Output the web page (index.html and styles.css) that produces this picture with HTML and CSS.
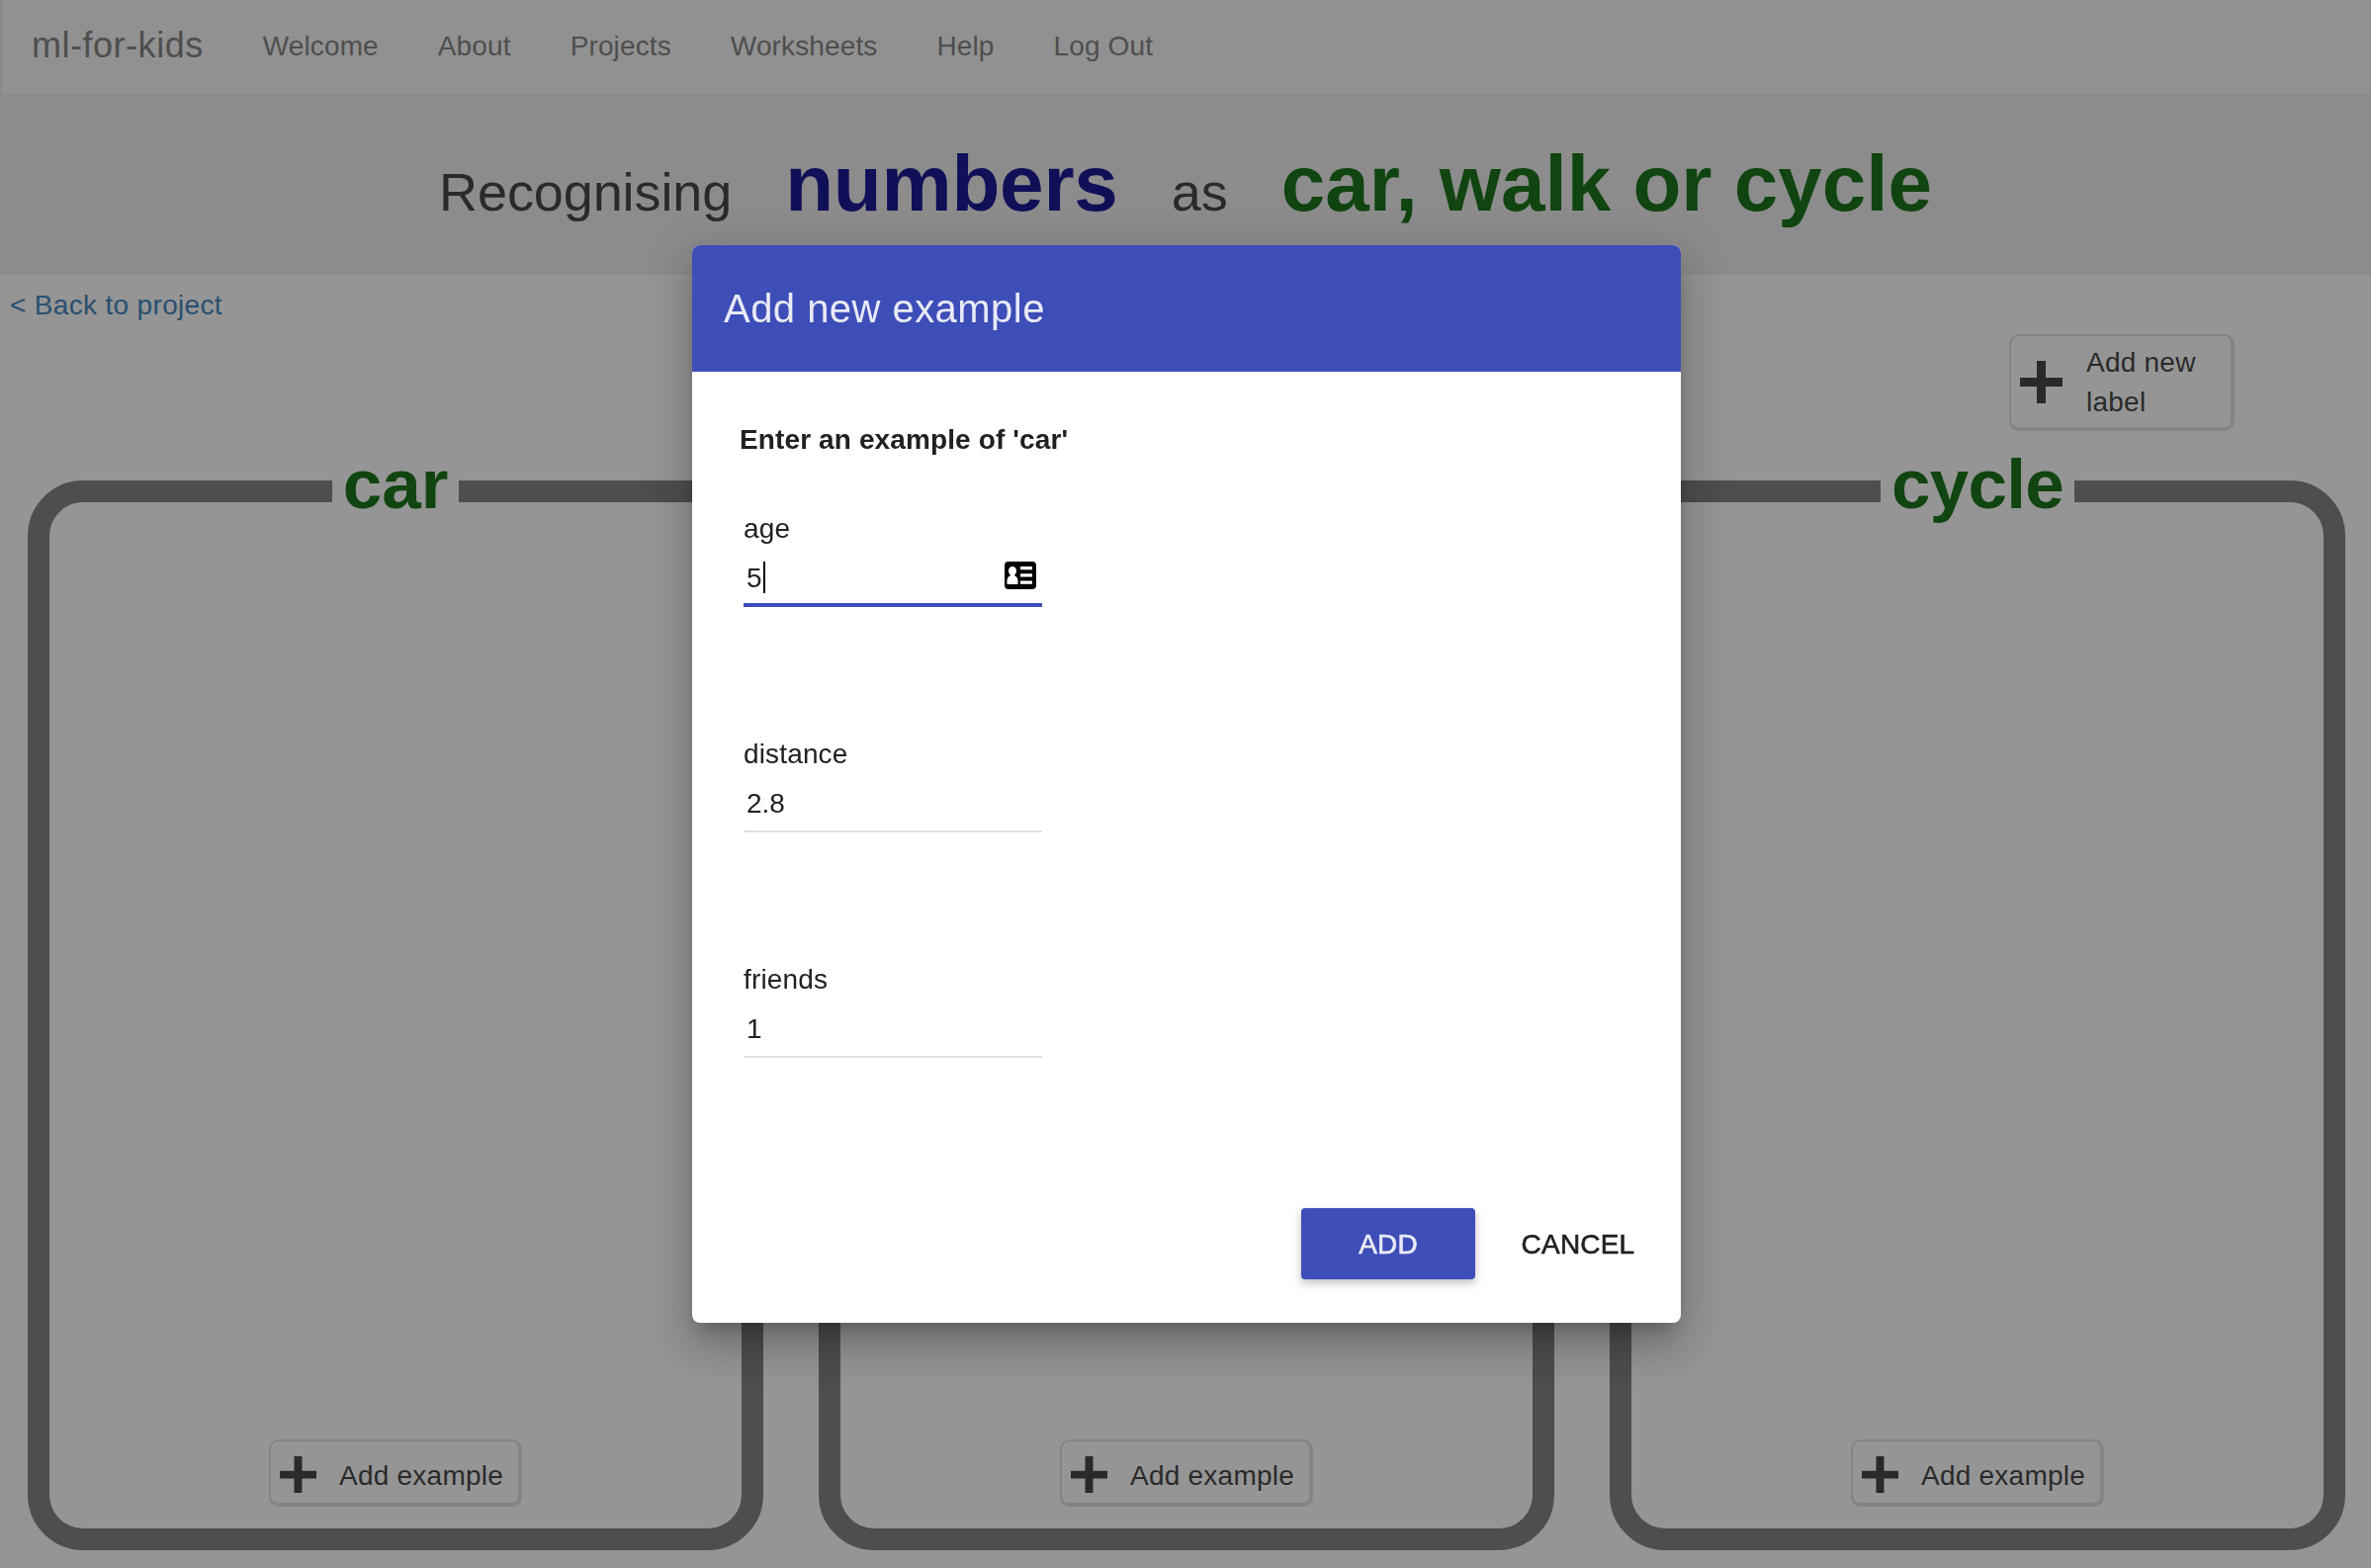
FILE: index.html
```html
<!DOCTYPE html>
<html lang="en">
<head>
<meta charset="utf-8">
<title>ml-for-kids</title>
<link rel="stylesheet" href="styles.css">
</head>
<body>
<div class="page">
  <nav class="navbar">
    <a class="brand">ml-for-kids</a>
    <a class="nav-link">Welcome</a>
    <a class="nav-link">About</a>
    <a class="nav-link">Projects</a>
    <a class="nav-link">Worksheets</a>
    <a class="nav-link">Help</a>
    <a class="nav-link">Log Out</a>
  </nav>
  <header class="banner">
    <span class="banner-text banner-verb">Recognising</span>
    <strong class="banner-type">numbers</strong>
    <span class="banner-text">as</span>
    <strong class="banner-labels">car, walk or cycle</strong>
  </header>
  <div class="back"><a class="back-link">&lt; Back to project</a></div>
  <div class="toolbar">
    <button class="btn btn-label">
      <svg class="plus-large" viewBox="0 0 43 43"><path d="M17 0h9v17h17v9H26v17h-9V26H0v-9h17z"/></svg>
      <span>Add new<br>label</span>
    </button>
  </div>
  <main class="buckets">
    <section class="bucket">
      <h2 class="bucket-title title-car">car</h2>
      <button class="btn btn-example">
        <svg class="plus" viewBox="0 0 37 37"><path d="M14.5 0h8v14.8H37v7.6H22.500V37h-8V22.400H0v-7.600h14.500z"/></svg>
        <span>Add example</span>
      </button>
    </section>
    <section class="bucket">
      <h2 class="bucket-title">walk</h2>
      <button class="btn btn-example">
        <svg class="plus" viewBox="0 0 37 37"><path d="M14.5 0h8v14.8H37v7.6H22.500V37h-8V22.400H0v-7.600h14.500z"/></svg>
        <span>Add example</span>
      </button>
    </section>
    <section class="bucket">
      <h2 class="bucket-title title-cycle">cycle</h2>
      <button class="btn btn-example">
        <svg class="plus" viewBox="0 0 37 37"><path d="M14.5 0h8v14.8H37v7.6H22.500V37h-8V22.400H0v-7.600h14.500z"/></svg>
        <span>Add example</span>
      </button>
    </section>
  </main>
</div>
<div class="backdrop">
  <div class="dialog">
    <div class="dialog-head">Add new example</div>
    <div class="dialog-body">
      <div class="prompt">Enter an example of 'car'</div>
      <div class="fields">
        <div class="field">
          <div class="field-name">age</div>
          <div class="field-value focused"><span>5</span><i class="caret"></i>
            <svg class="card-icon" viewBox="0 0 32 28">
              <rect width="32" height="28" rx="4" fill="#000"/>
              <path fill="#fff" d="M8 5c2.300 0 4 1.700 4 4.500 0 1.700-.8 3.200-1.900 4v.8c2.200.6 3.400 2.700 3.400 5.200V23H2.500v-3.500c0-2.500 1.200-4.600 3.400-5.200v-.8C4.800 12.700 4 11.200 4 9.500 4 6.700 5.700 5 8 5zM16 5h12v3.200H16zM16 12.200h12v3.200H16zM16 19.600h12v3.200H16z"/>
            </svg>
          </div>
        </div>
        <div class="field">
          <div class="field-name">distance</div>
          <div class="field-value"><span>2.8</span></div>
        </div>
        <div class="field">
          <div class="field-name">friends</div>
          <div class="field-value"><span>1</span></div>
        </div>
      </div>
    </div>
    <div class="actions">
      <button class="action primary">ADD</button>
      <button class="action">CANCEL</button>
    </div>
  </div>
</div>
</body>
</html>
```
FILE: styles.css
```css
* { box-sizing: border-box; }
body {
  margin: 0;
  background: #fff;
  color: #333;
  font: 28px/40px "Liberation Sans", Arial, sans-serif;
  overflow: hidden;
}
button { font: inherit; color: inherit; margin: 0; cursor: pointer; }
svg { display: block; flex: none; }

.page { height: 1586px; }
.navbar {
  display: flex;
  height: 98px;
  padding: 27px 0 0 30px;
  gap: 60px;
  background: #f8f8f8;
  border: solid #e7e7e7;
  border-width: 0 0 2px 2px;
  color: #777;
  letter-spacing: 0.13px;
}
.brand { font-size: 36px; margin-top: -1px; letter-spacing: 0.52px; }

.banner {
  display: flex;
  justify-content: center;
  align-items: baseline;
  height: 180px;
  padding-top: 48px;
  background: #eee;
  line-height: 80px;
  white-space: nowrap;
}
.banner-text { font-size: 54px; }
.banner-verb { letter-spacing: -0.1px; }
.banner-type, .banner-labels { font-size: 80px; margin: 0 54px; }
.banner-type { color: #00008b; letter-spacing: -0.2px; }
.banner-labels { color: #006400; margin-right: 0; }

.back { height: 60px; padding: 11px 10px 0; }
.back-link { color: #337ab7; letter-spacing: 0.33px; }
.toolbar { display: flex; justify-content: flex-end; padding-right: 138px; }

.btn {
  display: flex;
  align-items: center;
  padding: 0;
  text-align: left;
  white-space: nowrap;
  background: transparent;
  border: solid #dfdfdf;
  border-width: 2px 4px 4px 2px;
  border-radius: 10px;
  letter-spacing: 0.24px;
}
.btn svg { fill: #333; }
.btn-label { width: 228px; height: 98px; padding: 0 0 0 9px; }
.btn-label span { margin: 2px 0 0 24px; }
.plus-large { width: 43px; height: 43px; margin-top: 1px; }
.btn-example { width: 256px; height: 68px; padding-left: 9px; }
.btn-example span { margin: 8px 0 0 23px; }
.plus { width: 37px; height: 37px; margin-top: 5px; }

.buckets { display: flex; gap: 56px; padding: 50px 0 0 28px; }
.bucket {
  display: flex;
  flex-direction: column;
  justify-content: space-between;
  align-items: center;
  width: 744px;
  height: 1082px;
  flex: none;
  padding-bottom: 22px;
  border: 22px solid #777;
  border-radius: 56px;
}
.bucket-title {
  margin: -54px 0 0;
  font-size: 71px;
  line-height: 72px;
  text-align: center;
  color: #006400;
  background: #fff;
  padding: 0 10px;
}
.title-car { width: 128px; }
.title-cycle { width: 196px; letter-spacing: -0.7px; }

.backdrop {
  position: fixed;
  inset: 0;
  padding: 248px 0 0 700px;
  background: rgba(33, 33, 33, 0.48);
}
.dialog {
  width: 1000px;
  height: 1090px;
  background: #fff;
  color: #212121;
  border-radius: 8px;
  overflow: hidden;
  box-shadow: 0 14px 16px -8px rgba(0, 0, 0, 0.2), 0 26px 38px 4px rgba(0, 0, 0, 0.14), 0 10px 48px 8px rgba(0, 0, 0, 0.12);
}
.dialog-head {
  height: 128px;
  padding-left: 32px;
  background: #3e4eb8;
  color: #e8eaf6;
  font-size: 40px;
  line-height: 128px;
  letter-spacing: 0.46px;
}
.dialog-body { padding: 48px 48px 0; }
.prompt { height: 40px; line-height: 42px; font-weight: 700; letter-spacing: 0.12px; }
.fields { display: grid; gap: 128px; padding: 50px 4px 0; }
.field { width: 302px; height: 100px; line-height: 42px; }
.field-value {
  display: flex;
  align-items: flex-start;
  height: 50px;
  margin-top: 10px;
  padding-left: 3px;
  border-bottom: 2px solid #e0e0e0;
}
.focused { border-bottom: 4px solid #3e4eb8; }
.caret { width: 2px; height: 32px; margin: 4px 0 0 1px; background: #000; }
.card-icon { width: 32px; height: 28px; margin: 4px 6px 0 auto; }
.field-name { height: 40px; letter-spacing: 0.15px; }

.actions { display: flex; justify-content: flex-end; gap: 16px; padding: 152px 16px 0 0; }
.action {
  width: 176px;
  height: 72px;
  padding: 1px 0 0;
  border: 0;
  border-radius: 4px;
  background: transparent;
  letter-spacing: 0.2px;
  -webkit-text-stroke: 0.6px currentColor;
}
.primary {
  background: #3e4eb8;
  color: #e8eaf6;
  box-shadow: 0 4px 10px rgba(0, 0, 0, 0.26);
}
```
